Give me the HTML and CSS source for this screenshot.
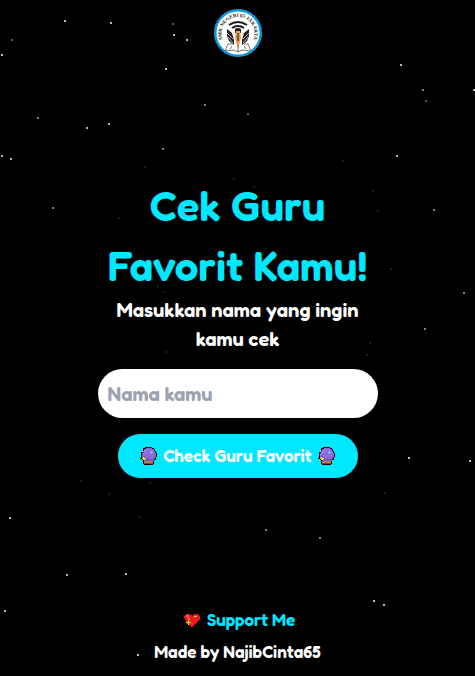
FILE: index.html
```html
<!DOCTYPE html>
<html lang="id">
<head>
<meta charset="utf-8">
<meta name="viewport" content="width=device-width, initial-scale=1">
<title>Cek Guru Favorit Kamu!</title>
<link rel="stylesheet" href="styles.css">
</head>
<body>
<svg class="stars" viewBox="0 0 475 676" preserveAspectRatio="xMidYMid slice" aria-hidden="true">
  <path class="star-bright" d="M64 21h2M110 23h2M173 35h2M186 40h2M1 55h2M165 69h2M86 128h2M108 124h2M1 156h2M10 159h2M400 65h2M473 90h2M396 156h2M9 518h2M66 575h2M125 574h2M4 611h2M137 655h2M408 458h2M469 461h2M373 601h2M383 605h2"/>
  <path class="star-mid" d="M204 105h2M37 118h2M162 149h2M422 90h2M433 210h2M52 208h2M265 530h2M319 538h2M463 293h2M424 329h2"/>
  <path class="star-dim" d="M172 24h2M11 40h2M425 101h2M247 114h2"/>
  <path class="star-faint" d="M144 167h2M233 179h2M118 218h2M342 161h2M253 187h2M372 191h2M377 211h2M80 481h2M108 494h2M149 483h2M138 517h2M384 493h2M157 287h2M163 292h2M165 352h2M390 269h2M369 343h2M366 355h2"/>
</svg>

<svg class="sprites" aria-hidden="true">
  <symbol id="crystal-ball" viewBox="0 0 17 18">
    <path fill="#000" d="M5 0h7v1h2v1h1v2h1v2h1v4h-1v3h-2v4h-1v1H4v-1H3v-4H2v-1H0v-1h1V5h1V3h1V1h2z"/>
    <path fill="#8a6bdb" d="M6 1h6v1h2v2h1v2h1v4h-1v2h-1v2H4v-1H3v-2H2V6h1V4h1V2h2z"/>
    <path fill="#755bc0" d="M3 9h2v2h3v1h4v-1h3v1h-1v2H4v-2H3z"/>
    <path fill="#9b7ae6" d="M5 3h3v1H6v2H4V4h1z"/>
    <path fill="#e3b2ed" d="M2 3h1v2H2z"/>
    <path fill="#54dcf5" d="M11 4h1v1h1v1h-1v1h-1V6h-1V5h1z"/>
    <path fill="#b77e51" d="M4 14h9v3H4z"/>
    <path fill="#7c4a34" d="M4 16h9v1H4z"/>
    <path fill="#ffe000" d="M3 10h1v1h2v1H5v1H3v-1H2v-1h1z"/>
  </symbol>
  <symbol id="heart" viewBox="0 0 16 14">
    <path fill="#ee1822" d="M2 1h4v1h2v1h1V2h1V1h4v1h1v1h1v4h-1v1h-1v1h-1v1h-1v1h-1v1h-1v1H9v1H7v-1H6v-1H5v-1H3V9H2V7H1V5H0V3h1V2h1z"/>
    <path fill="#ff6260" d="M2 2h2v1h1v2h1v2H4V5H3V4H2z"/>
    <path fill="#ffe600" d="M10 3h3v1h-3zM4 7h1v2h2v1H5v2H4v-2H2V9h2z"/>
  </symbol>
</svg>

<header class="header">
  <svg class="logo" viewBox="0 0 48 48" role="img" aria-label="Logo SMK Negeri 65 Jakarta">
    <circle cx="24" cy="24" r="22.750" fill="#fff" stroke="#0d99dc" stroke-width="2.500"/>
    <path id="logo-arc" d="M8.500 30A16.500 16.500 0 1 1 39.500 30" fill="none"/>
    <text class="logo-text"><textPath href="#logo-arc" startOffset="50%" text-anchor="middle">SMK NEGERI 65 JAKARTA</textPath></text>
    <g fill="none" stroke="#191b1d" stroke-width="2">
      <path d="M15 16q9-6 18 0M18 19q6-4 12 0"/>
    </g>
    <path fill="#24201f" d="M21 20q3-2 6 0v4h-6zM13 20l5 4 2 7v5l-5-4-2-5zM35 20l-5 4-2 7v5l5-4 2-5z"/>
    <path stroke="#b8b2ad" stroke-width="1" d="M13 24l6 6M14 28l5 6M35 24l-6 6M34 28l-5 6"/>
    <path fill="#f29b50" d="M22 22h4l1 7-3 11-3-11z"/>
    <path fill="#5b6646" d="M23 24h2v8h-2z"/>
    <path fill="none" stroke="#77736e" d="M18 35h-4l-3 7 9-1 4 2 4-2 9 1-3-7h-4M24 36v7M18 37l-2 3M30 37l2 3"/>
  </svg>
</header>

<main class="main">
  <h1 class="title">Cek Guru Favorit Kamu!</h1>
  <form class="form">
    <label class="subtitle" for="nama">Masukkan nama yang ingin kamu cek</label>
    <input class="name-input" id="nama" type="text" placeholder="Nama kamu">
    <button class="check-button" type="button">
      <svg class="ball"><use href="#crystal-ball"/></svg>
      <span>Check Guru Favorit</span>
      <svg class="ball"><use href="#crystal-ball"/></svg>
    </button>
  </form>
</main>

<footer class="footer">
  <a class="support" href="#"><svg class="heart"><use href="#heart"/></svg>Support Me</a>
  <p class="credit">Made by NajibCinta65</p>
</footer>
</body>
</html>
```

FILE: styles.css
```css
* {
  box-sizing: border-box;
}

body {
  display: flex;
  flex-direction: column;
  align-items: center;
  min-height: 100vh;
  margin: 0;
  padding: 9px 16px 12px;
  background: #000;
  color: #fff;
  font-family: Fredoka, Lato, "Open Sans", sans-serif;
  font-size: 17px;
  font-weight: 600;
  line-height: 24px;
}

.stars {
  position: absolute;
  inset: 0;
  z-index: -1;
  width: 100%;
  height: 100%;
  shape-rendering: crispEdges;
  stroke-width: 2;
}

.star-bright { stroke: #bbb; }
.star-mid { stroke: #808080; }
.star-dim { stroke: #555; }
.star-faint { stroke: #1d1d1d; }

.sprites {
  position: absolute;
  width: 0;
  height: 0;
}

.logo {
  display: block;
  width: 48px;
  height: 48px;
}

.logo-text {
  fill: #222;
  font-family: "Liberation Serif", serif;
  font-size: 5px;
  font-weight: 700;
}

.main {
  display: flex;
  flex: 1;
  flex-direction: column;
  justify-content: center;
  width: 100%;
  max-width: 280px;
  padding-bottom: 11px;
}

.title {
  margin: 0;
  color: #00e8ff;
  font-size: 42px;
  font-weight: 600;
  line-height: 60px;
  text-align: center;
}

.form {
  display: flex;
  flex-direction: column;
  align-items: center;
}

.subtitle {
  margin-bottom: 15px;
  font-size: 20px;
  line-height: 29px;
  text-align: center;
}

.name-input {
  width: 100%;
  height: 49px;
  margin-bottom: 16px;
  padding: 0 10px;
  border: 0;
  border-radius: 25px;
  background: #fff;
  color: #111827;
  font: inherit;
  font-size: 20px;
}

.name-input::placeholder {
  color: #9ca3af;
  opacity: 1;
}

.check-button {
  display: flex;
  align-items: center;
  justify-content: center;
  gap: 6px;
  width: 240px;
  height: 44px;
  padding: 0;
  border: 0;
  border-radius: 22px;
  background: #00e8ff;
  color: #fff;
  font: inherit;
  white-space: nowrap;
}

.ball {
  width: 17px;
  height: 18px;
  shape-rendering: crispEdges;
}

.footer {
  display: flex;
  flex-direction: column;
  align-items: center;
  gap: 8px;
}

.support {
  display: flex;
  align-items: center;
  gap: 7px;
  padding-left: 4px;
  color: #00e8ff;
  text-decoration: none;
}

.heart {
  width: 16px;
  height: 14px;
  shape-rendering: crispEdges;
}

.credit {
  margin: 0;
}
```
